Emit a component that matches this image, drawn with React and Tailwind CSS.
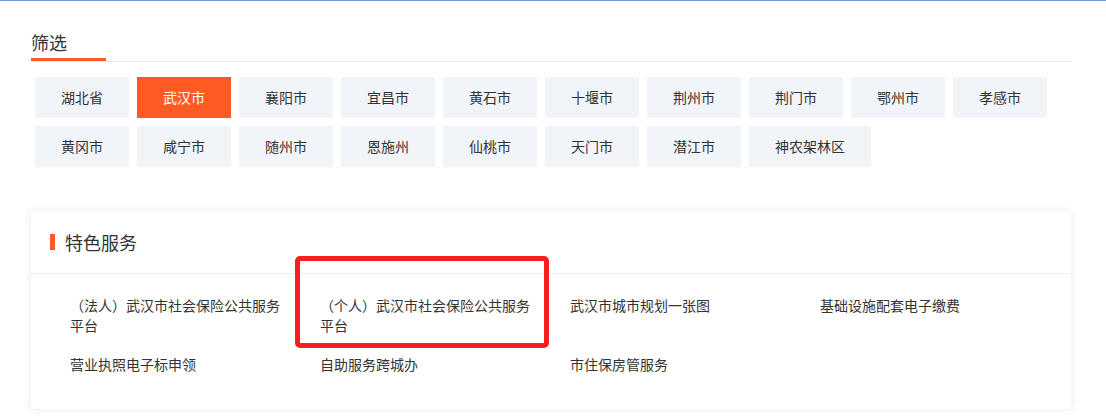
import React from "react";

const cities = [
  "湖北省", "武汉市", "襄阳市", "宜昌市", "黄石市", "十堰市", "荆州市", "荆门市", "鄂州市", "孝感市",
  "黄冈市", "咸宁市", "随州市", "恩施州", "仙桃市", "天门市", "潜江市", "神农架林区",
];

const services = [
  "（法人）武汉市社会保险公共服务平台",
  "（个人）武汉市社会保险公共服务平台",
  "武汉市城市规划一张图",
  "基础设施配套电子缴费",
  "营业执照电子标申领",
  "自助服务跨城办",
  "市住保房管服务",
];

export default function App() {
  const active = "武汉市";
  return (
    <div
      className="w-[1106px] h-[420px] bg-white text-[#333] overflow-hidden"
      style={{ fontFamily: '"Microsoft YaHei", "Noto Sans CJK SC", sans-serif' }}
    >
      <div className="h-px bg-[#6b98d8]" />
      <div className="pl-[31px] pr-[34px]">
        {/* tab header */}
        <div className="pt-[29px]">
          <div className="text-[18px] leading-[24px] text-[#333]">筛选</div>
          <div className="mt-[4px] h-[3px] w-[75px] bg-[#ff5a22]" />
          <div className="h-px bg-[#ebedf0]" />
        </div>

        {/* city filters */}
        <div className="mt-[15px] pl-[4px] flex flex-wrap gap-[8px] w-[1030px]">
          {cities.map((c) => (
            <div
              key={c}
              className={
                c === active
                  ? "h-[41px] px-[26px] flex items-center justify-center text-[14px] bg-[#ff5a22] text-white"
                  : "h-[41px] px-[26px] flex items-center justify-center text-[14px] bg-[#f1f4f9] text-[#333]"
              }
            >
              {c}
            </div>
          ))}
        </div>

        {/* featured services card */}
        <div className="relative mt-[44px] w-[1040px] h-[198px] bg-white shadow-[0_0_8px_rgba(0,0,0,0.09)]">
          <div className="h-[63px] flex items-center pl-[19px] border-b border-[#ebedf0]">
            <span className="w-[5px] h-[16px] bg-[#ff5a22]" />
            <span className="ml-[10px] text-[18px] leading-[24px]">特色服务</span>
          </div>
          <div className="pl-[39px] pt-[21px] grid grid-cols-[250px_250px_250px_250px] gap-y-[19px]">
            {services.map((s) => (
              <div key={s} className="w-[222px] text-[14px] leading-[20px] text-[#333]">
                {s}
              </div>
            ))}
          </div>
          {/* highlight annotation */}
          <div className="absolute left-[264px] top-[45px] w-[254px] h-[92px] border-[5px] border-[#fa1d1d] rounded-[5px]" />
        </div>
      </div>
    </div>
  );
}
